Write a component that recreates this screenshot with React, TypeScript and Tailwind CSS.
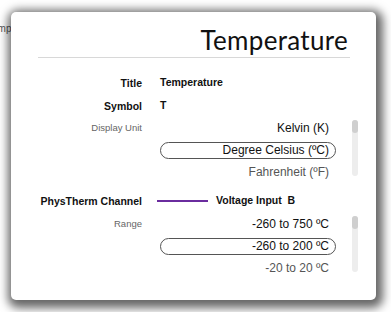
import React from "react";

const units = ["Kelvin (K)", "Degree Celsius (ºC)", "Fahrenheit (ºF)"];
const ranges = ["-260 to 750 ºC", "-260 to 200 ºC", "-20 to 20 ºC"];

const Picker = ({ items, selected }: { items: string[]; selected: number }) => (
  <div className="flex items-start">
    <div className="w-[176px]">
      {items.map((item, i) => (
        <div key={item} className="h-[22px] flex items-center">
          <div
            className={
              i === selected
                ? "w-full h-[17px] flex items-center justify-end pr-[6px] rounded-full border border-[#555] text-[12px] text-[#111]"
                : i === 0
                  ? "w-full flex items-center justify-end pr-[7px] text-[12px] text-[#111]"
                  : "w-full flex items-center justify-end pr-[7px] text-[12px] text-[#555]"
            }
          >
            {item}
          </div>
        </div>
      ))}
    </div>
    {/* scrollbar */}
    <div className="ml-[16px] mt-[3px] w-[6px] h-[56px] rounded-full bg-[#ededed]">
      <div className="w-[6px] h-[13px] rounded-full bg-[#cfcfcf]" />
    </div>
  </div>
);

const Label = ({ children, muted }: { children: React.ReactNode; muted?: boolean }) => (
  <div
    className={
      muted
        ? "w-[104px] text-right whitespace-nowrap text-[9.5px] text-[#666] leading-[22px]"
        : "w-[104px] text-right whitespace-nowrap text-[10.5px] font-bold text-[#111] leading-[22px]"
    }
  >
    {children}
  </div>
);

export default function App() {
  return (
    <div
      className="relative w-[391px] h-[312px] overflow-hidden bg-white pt-[12px] pl-[11px]"
      style={{ fontFamily: '"Liberation Sans", Arial, sans-serif' }}
    >
      {/* text of the page behind the dialog */}
      <span className="absolute left-[-13px] top-[21px] text-[10px] text-[#555]">Temp</span>

      <div className="relative w-[365px] h-[288px] rounded-[5px] bg-white shadow-[2px_3px_10px_5px_rgba(0,0,0,0.6)]">
        <div className="mx-[26px] ml-[27px] pt-[11px] border-b border-[#d8d8d8]">
          <div
            className="text-right pr-[2px] text-[26px] leading-[34px] font-normal tracking-[0.3px] text-[#111]"
            style={{ fontFamily: '"Lato", "DejaVu Sans", sans-serif' }}
          >
            Temperature
          </div>
        </div>

        <div className="ml-[27px] mt-[14px] flex flex-col">
          <div className="flex items-center gap-[18px]">
            <Label>Title</Label>
            <span className="text-[10.5px] font-bold text-[#111]">Temperature</span>
          </div>
          <div className="flex items-center gap-[18px] mt-[1px]">
            <Label>Symbol</Label>
            <span className="text-[10.5px] font-bold text-[#111]">T</span>
          </div>
          <div className="flex items-start gap-[18px]">
            <Label muted>Display Unit</Label>
            <Picker items={units} selected={1} />
          </div>
          <div className="flex items-center gap-[18px] mt-[7px]">
            <Label>PhysTherm Channel</Label>
            <div className="flex items-center -ml-[3px]">
              <div className="w-[51px] h-[2px] bg-[#6a2c9e]" />
              <span className="ml-[8px] text-[10.5px] font-bold text-[#111] whitespace-pre">Voltage Input  B</span>
            </div>
          </div>
          <div className="flex items-start gap-[18px] mt-[1px]">
            <Label muted>Range</Label>
            <Picker items={ranges} selected={1} />
          </div>
        </div>
      </div>
    </div>
  );
}
